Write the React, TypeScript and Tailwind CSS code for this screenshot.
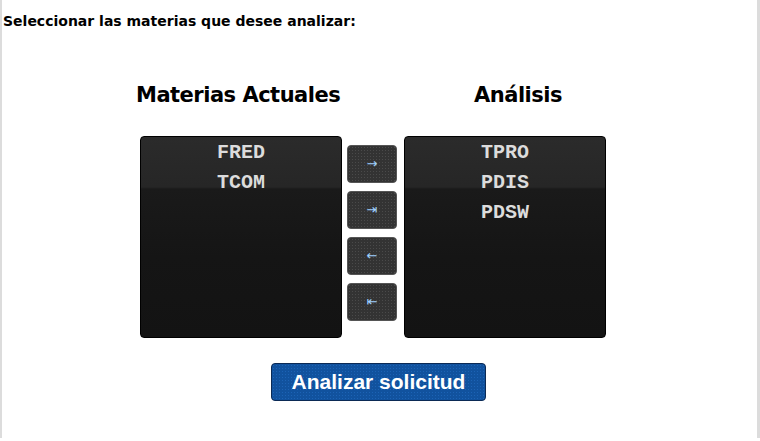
import React from "react";

const actuales = ["FRED", "TCOM"];
const analisis = ["TPRO", "PDIS", "PDSW"];

const arrows = ["→", "⇥", "←", "⇤"];

// list box with the dark glossy look
const ListBox = ({ items }: { items: string[] }) => {
  return (
    <div className="w-[202px] h-[202px] rounded-[4px] border border-black overflow-hidden bg-[linear-gradient(to_bottom,#2b2b2b_0px,#262626_50px,#1a1a1a_52px,#151515_120px,#131313_100%)]">
      <ul className="pt-[1px] flex flex-col items-center">
        {items.map((item, index) => (
          <li
            key={`item-${index}`}
            className="h-[30px] leading-[30px] text-[20px] font-bold text-[#dcdcdc] font-['Liberation_Mono',monospace]"
          >
            {item}
          </li>
        ))}
      </ul>
    </div>
  );
};

const App = () => {
  return (
    <div className="w-[760px] h-[441px] bg-white">
      <div className="h-[438px] border-l-2 border-r-[3px] border-[#dcdcdc] font-['DejaVu_Sans',sans-serif]">
        <p className="pl-px pt-[13px] text-[14px] leading-[16px] font-bold text-black whitespace-nowrap">
          Seleccionar las materias que desee analizar:
        </p>

        <div className="flex mt-[53px] ml-[134px] text-black whitespace-nowrap">
          <h2 className="w-[202px] text-center text-[21px] leading-[26px] font-bold tracking-[-0.5px]">
            Materias Actuales
          </h2>
          <h2 className="ml-[66px] w-[202px] pl-[26px] text-center text-[21px] leading-[26px] font-bold tracking-[-0.5px]">
            Análisis
          </h2>
        </div>

        <div className="flex mt-[28px] ml-[138px]">
          <ListBox items={actuales} />
          <div className="ml-[5px] w-[50px] pt-[9px] flex flex-col gap-[8px]">
            {arrows.map((arrow, index) => (
              <button
                key={`arrow-${index}`}
                className="h-[38px] w-[50px] rounded-[4px] border border-[#555] bg-[#333] bg-[radial-gradient(#4a4a4a_0.8px,transparent_0.9px)] bg-[size:3px_3px] text-[13px] text-[#9fd0ff] flex items-center justify-center font-['DejaVu_Sans',sans-serif]"
              >
                {arrow}
              </button>
            ))}
          </div>
          <div className="ml-[7px]">
            <ListBox items={analisis} />
          </div>
        </div>

        <div className="ml-[269px] mt-[25px]">
          <button className="w-[215px] h-[38px] rounded-[4px] border border-[#0b2a55] bg-[#11529e] bg-[radial-gradient(#1c63b5_0.8px,transparent_0.9px)] bg-[size:3px_3px] text-white text-[21px] font-bold font-['Liberation_Sans',Arial,sans-serif]">
            Analizar solicitud
          </button>
        </div>
      </div>
    </div>
  );
};

export default App;
